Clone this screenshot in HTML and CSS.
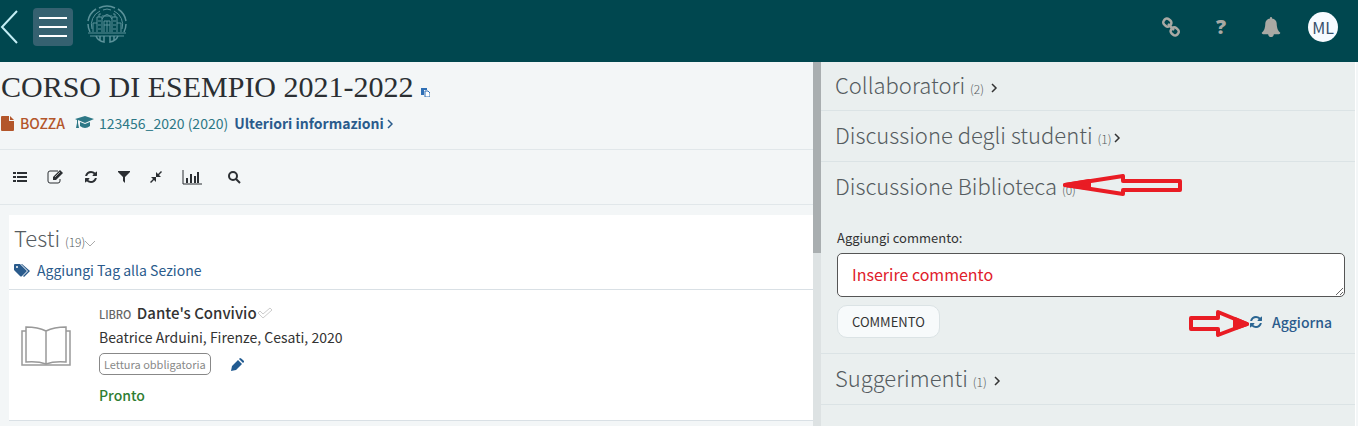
FILE: index.html
```html
<!DOCTYPE html>
<html lang="it">
  <head>
    <meta charset="UTF-8" />
    <meta name="viewport" content="width=device-width, initial-scale=1.0" />
    <title>Corso di esempio 2021-2022</title>
    <link rel="stylesheet" href="styles.css">
  </head>
  <body>
    <header class="topbar">
      <a class="back" href="#" aria-label="Indietro">
        <svg width="18" height="34" viewBox="0 0 18 34"><path d="M17 1L2 17l15 16" fill="none" stroke="#c4eef5" stroke-width="2" /></svg>
      </a>
      <button class="menu" aria-label="Menu"><span></span><span></span><span></span></button>
      <svg class="crest" width="40" height="38" viewBox="0 0 40 38" fill="none" stroke="#5b929a">
        <path d="M3 27A18 18 0 0 1 1 19M1 16A18 18 0 0 1 9 4M12 3a18 18 0 0 1 16 0M31 4a18 18 0 0 1 8 12M39 19a18 18 0 0 1-2 8" stroke-width="1.5" />
        <path d="M5 24A15 15 0 0 1 13 6M16 5q4-2 8 0M27 6a15 15 0 0 1 8 18" />
        <path d="M1 28h38M3 31h34M10 27V12h5v15M25 27V12h5v15M15 14q5-9 10 0M17 27V16h6v11M6 27v-9h4M30 18h4v9M12 12V9h2M28 12V9h-2M17 20h6M11 16h3M26 16h3M11 20h3M26 20h3M11 24h3M26 24h3M20 16v11M15 11h10" />
        <path d="M9 31q2 5 8 6v-6M23 31v6q6-1 8-6M13 31v4M27 31v4" stroke-width="1.5" />
      </svg>
      <nav>
        <a href="#" aria-label="Collegamenti">
          <svg width="20" height="20" viewBox="0 0 20 20" fill="none" stroke="#a9a9a4" stroke-width="2.5"><rect x="2" y="2" width="8" height="7" rx="3" transform="rotate(40 6 6)" /><rect x="10" y="11" width="8" height="7" rx="3" transform="rotate(40 14 14)" /><path d="M7 7l6 6" /></svg>
        </a>
        <a href="#" class="help" aria-label="Aiuto">?</a>
        <a href="#" aria-label="Notifiche">
          <svg width="20" height="20" viewBox="0 0 1792 1792" fill="#a9a9a4"><path d="M1728 1408q0 52-38 90t-90 38h-448q0 106-75 181t-181 75-181-75-75-181h-448q-52 0-90-38t-38-90q50-42 91-88t85-119.500 74.500-158.500 50-206 19.500-260q0-152 117-282.500t307-158.500q-8-19-8-39 0-40 28-68t68-28 68 28 28 68q0 20-8 39 190 28 307 158.500t117 282.500q0 139 19.500 260t50 206 74.500 158.500 85 119.500 91 88z" /></svg>
        </a>
        <a href="#" class="avatar">ML</a>
      </nav>
    </header>

    <div class="page">
      <main>
        <div class="intro">
          <h1>CORSO DI ESEMPIO 2021-2022
            <svg width="9" height="9" viewBox="0 0 9 9"><path d="M0 0h6v2H3v5H0z" fill="#2f6fb5" /><path d="M4 3h3l2 2v4H4z" fill="#fff" stroke="#2f6fb5" /></svg>
          </h1>
          <div class="meta">
            <svg width="13" height="15" viewBox="0 0 13 15" fill="#b3562b"><path d="M1 0h7v5h5v9q0 1-1 1H1q-1 0-1-1V1q0-1 1-1zM9 0l4 4H9z" /></svg>
            <span class="status">BOZZA</span>
            <svg class="cap" width="19" height="14" viewBox="0 0 19 14" fill="#2d7886"><path d="M10 0l9 3-9 4-7-3v3l1 5H1l1-5V4L0 3zM5 6l5 2 5-2v4q-5 4-10 0z" /></svg>
            <span class="code">123456_2020 (2020)</span>
            <a href="#" class="more">Ulteriori informazioni <svg width="6" height="10" viewBox="0 0 6 10"><path d="M1 1l4 4-4 4" /></svg></a>
          </div>
        </div>

        <div class="toolbar">
          <button aria-label="Elenco"><svg width="14" height="12" viewBox="0 0 14 12" fill="#2b2f33"><path d="M0 1h3v2H0zM4 1h10v2H4zM0 5h3v2H0zM4 5h10v2H4zM0 9h3v2H0zM4 9h10v2H4z" /></svg></button>
          <button aria-label="Modifica"><svg width="17" height="14" viewBox="0 0 17 14"><path d="M11 1H3Q1 1 1 3v8q0 2 2 2h8q2 0 2-2V9" fill="none" stroke="#2b2f33" /><path d="M6 7l7-7 3 3-7 7H6z" fill="#2b2f33" /><path d="M8 7l5-5" stroke="#aaa" /></svg></button>
          <button aria-label="Aggiorna elenco"><svg width="14" height="14" viewBox="0 0 1792 1792" fill="#2b2f33"><path d="M1639 1056q0 5-1 7-64 268-268 434.500t-478 166.500q-146 0-282.500-55t-243.500-157l-129 129q-19 19-45 19t-45-19-19-45v-448q0-26 19-45t45-19h448q26 0 45 19t19 45-19 45l-137 137q71 66 161 102t187 36q134 0 250-65t186-179q11-17 53-117 8-23 30-23h192q13 0 22.500 9.500t9.500 22.500zm25-800v448q0 26-19 45t-45 19h-448q-26 0-45-19t-19-45 19-45l138-138q-148-137-349-137-134 0-250 65t-186 179q-11 17-53 117-8 23-30 23h-199q-13 0-22.500-9.500t-9.500-22.500v-7q65-268 270-434.500t480-166.500q146 0 284 55.500t245 156.500l130-129q19-19 45-19t45 19 19 45z" /></svg></button>
          <button aria-label="Filtra"><svg width="12" height="12" viewBox="0 0 12 12" fill="#2b2f33"><path d="M0 0h12v1L7 6v6L5 10V6L0 1z" /></svg></button>
          <button aria-label="Comprimi"><svg width="12" height="12" viewBox="0 0 12 12"><path d="M6 6V1l2 2 3-3 1 1-3 3 2 2zM6 6H1l2 2-3 3 1 1 3-3 2 2z" fill="#2b2f33" /></svg></button>
          <button aria-label="Statistiche"><svg width="20" height="15" viewBox="0 0 20 15"><path d="M1 0v14h19" fill="none" stroke="#2b2f33" /><path d="M4 8h2v5H4zM8 4h2v9H8zM12 6h2v7h-2zM15 2h2v11h-2z" fill="#2b2f33" /></svg></button>
          <button aria-label="Cerca"><svg width="13" height="13" viewBox="0 0 13 13" fill="none" stroke="#2b2f33" stroke-width="2"><circle cx="5" cy="5" r="4" /><path d="M8 8l4 4" /></svg></button>
        </div>

        <section class="texts">
          <div class="texts-head">
            <h2>Testi <small>(19)</small><svg width="10" height="6" viewBox="0 0 10 6"><path d="M0 0l5 5 5-5" fill="none" stroke="#aaa" /></svg></h2>
            <a href="#">
              <svg width="17" height="13" viewBox="0 0 17 13" fill="#2a5b8c"><path d="M0 1q0-1 1-1h5l7 7-5 5q-1 1-2 0L0 6zM8 0l8 7-6 6-1-1 5-5-7-7z" /><circle cx="3" cy="3" r="1" fill="#fff" /></svg>
              Aggiungi Tag alla Sezione
            </a>
          </div>
          <article>
            <svg width="50" height="40" viewBox="0 0 50 40" fill="none" stroke="#999" stroke-width="1.500"><path d="M5 5H1v34h48V5h-4" /><path d="M25 5Q17 1 5 1v35q12-1 20 2 8-3 20-2V1Q33 1 25 5v33" /></svg>
            <div>
              <h3><span>LIBRO</span> Dante's Convivio<svg width="16" height="12" viewBox="0 0 16 12"><path d="M1 6l2-2 3 3 7-6 2 2-9 8z" fill="none" stroke="#ccc" /></svg></h3>
              <p>Beatrice Arduini, Firenze, Cesati, 2020</p>
              <div class="tags">
                <span class="tag">Lettura obbligatoria</span>
                <button aria-label="Modifica tag"><svg width="13" height="13" viewBox="0 0 13 13" fill="#225b91"><path d="M0 13l1-5 6-6 4 4-6 6zM8 1l1-1q1 0 4 3v1l-1 1z" /></svg></button>
              </div>
              <p class="ready">Pronto</p>
            </div>
          </article>
        </section>
      </main>

      <div class="scroll"></div>

      <aside>
        <section class="row"><h2>Collaboratori <small>(2)</small></h2><svg class="wide" width="7" height="10" viewBox="0 0 7 10"><path d="M1 1l4 4-4 4" /></svg></section>
        <section class="row"><h2>Discussione degli studenti <small>(1)</small></h2><svg width="7" height="10" viewBox="0 0 7 10"><path d="M1 1l4 4-4 4" /></svg></section>
        <section class="library">
          <div class="row">
            <h2>Discussione Biblioteca <small>(0)</small>
              <svg class="arrow-left" width="120" height="22" viewBox="0 0 120 22"><path d="M2 11L60 2v5h57v9H60v4z" fill="none" /><path d="M2 11l24-4v7z" /></svg>
            </h2>
          </div>
          <form>
            <label for="comment">Aggiungi commento:</label>
            <textarea id="comment" rows="1">Inserire commento</textarea>
            <div class="actions">
              <button type="button">COMMENTO</button>
              <a href="#">
                <svg width="14" height="14" viewBox="0 0 1792 1792" fill="#2a6592"><path d="M1639 1056q0 5-1 7-64 268-268 434.500t-478 166.500q-146 0-282.500-55t-243.500-157l-129 129q-19 19-45 19t-45-19-19-45v-448q0-26 19-45t45-19h448q26 0 45 19t19 45-19 45l-137 137q71 66 161 102t187 36q134 0 250-65t186-179q11-17 53-117 8-23 30-23h192q13 0 22.500 9.500t9.500 22.500zm25-800v448q0 26-19 45t-45 19h-448q-26 0-45-19t-19-45 19-45l138-138q-148-137-349-137-134 0-250 65t-186 179q-11 17-53 117-8 23-30 23h-199q-13 0-22.500-9.500t-9.500-22.500v-7q65-268 270-434.500t480-166.500q146 0 284 55.500t245 156.500l130-129q19-19 45-19t45 19 19 45z" /></svg>
                Aggiorna
                <svg class="arrow-right" width="61" height="29" viewBox="0 0 61 29"><path d="M59 15L30 26v-6H3V9h27V3z" fill="none" /><path d="M59 15l-12-5v9z" /></svg>
              </a>
            </div>
          </form>
        </section>
        <section class="row"><h2>Suggerimenti <small>(1)</small></h2><svg class="wide" width="7" height="10" viewBox="0 0 7 10"><path d="M1 1l4 4-4 4" /></svg></section>
      </aside>
    </div>
  </body>
</html>
```
FILE: styles.css
```css
* {
  box-sizing: border-box;
}

body {
  display: flex;
  flex-direction: column;
  min-height: 100vh;
  margin: 0;
  font-family: "Noto Sans CJK JP", "Noto Sans", sans-serif;
  font-size: 14px;
  line-height: 24px;
  color: #333;
  background-color: #f3f6f7;
}

h1, h2, h3, p {
  margin: 0;
}

a {
  color: #2a5b8c;
  text-decoration: none;
}

button {
  padding: 0;
  border: 0;
  background: none;
  font-family: inherit;
  cursor: pointer;
}

svg {
  flex: none;
}

.topbar {
  display: flex;
  align-items: flex-start;
  height: 62px;
  padding-right: 20px;
  background-color: #00474f;
}

.back {
  height: 34px;
  margin-top: 10px;
}

.menu {
  display: flex;
  flex-direction: column;
  align-items: center;
  justify-content: center;
  gap: 7px;
  width: 40px;
  height: 38px;
  margin: 8px 14px 0 15px;
  border-radius: 4px;
  background-color: #356170;
}

.menu span {
  width: 28px;
  height: 2px;
  background-color: #fff;
}

.crest {
  margin-top: 5px;
}

.topbar nav {
  display: flex;
  align-items: center;
  gap: 30px;
  margin: 12px 0 0 auto;
}

.topbar nav a {
  display: flex;
  justify-content: center;
  width: 20px;
}

.topbar .help {
  font-family: "Open Sans", sans-serif;
  font-size: 20px;
  font-weight: 800;
  color: #a9a9a4;
}

.topbar nav .avatar {
  width: 30px;
  margin-left: -3px;
  border-radius: 50%;
  background-color: #f7fbff;
  font-size: 16px;
  line-height: 30px;
  color: #35506b;
}

.page {
  flex: 1;
  display: grid;
  grid-template-columns: minmax(0, 813fr) 8px minmax(0, 537fr);
}

.intro {
  height: 87px;
  padding: 7px 1px 0;
}

h1 {
  font-family: "Liberation Serif", serif;
  font-size: 30px;
  font-weight: 400;
  line-height: 36px;
  color: #2b2f33;
}

.meta {
  display: flex;
  align-items: center;
  margin-top: 6px;
}

.status {
  margin: 0 10px 0 6px;
  font-weight: 500;
  color: #b3562b;
}

.code {
  margin: 0 6px 0 5px;
  color: #2d7886;
}

.more {
  font-weight: 700;
}

.more path,
.row path {
  fill: none;
  stroke: currentColor;
  stroke-width: 1.5;
}

.toolbar {
  display: flex;
  align-items: center;
  gap: 20px;
  height: 56px;
  padding-left: 13px;
  border: solid #e1e7ea;
  border-width: 1px 0;
}

.toolbar button {
  display: flex;
}

.toolbar button:last-child {
  margin-left: 6px;
}

.texts {
  margin: 10px 0 0 9px;
  background-color: #fff;
}

.texts-head {
  height: 75px;
  padding: 6px 5px;
  border-bottom: 1px solid #d9e0e5;
}

h2 {
  font-size: 22px;
  font-weight: 300;
  line-height: 32px;
  color: #555c60;
}

h2 small {
  font-size: 12px;
}

.texts-head a {
  display: flex;
  align-items: center;
  gap: 6px;
}

article {
  display: flex;
  gap: 28px;
  height: 131px;
  padding: 11px 12px;
  border-bottom: 1px solid #d9e0e5;
}

article > svg {
  margin-top: 25px;
}

h3 {
  font-size: 15px;
  font-weight: 500;
  line-height: 24px;
}

h3 span {
  margin-right: 2px;
  font-size: 11px;
  color: #666;
}

article p {
  line-height: 22px;
}

.tags {
  display: flex;
  align-items: center;
  gap: 20px;
  margin: 5px 0 9px;
}

.tags button {
  display: flex;
}

.tag {
  padding: 0 4px;
  border: 1px solid #888;
  border-radius: 5px;
  font-size: 11px;
  line-height: 20px;
  color: #888;
}

.ready {
  font-weight: 500;
  color: #2f7d32;
}

.scroll {
  background: linear-gradient(#a9aeb0, #a9aeb0) no-repeat top / 100% 191px #dde2e3;
}

aside {
  margin-right: 2px;
  border-right: 1px solid #fff;
  background-color: #eaefef;
}

.row {
  display: flex;
  align-items: center;
  height: 51px;
  padding: 0 14px;
  border-bottom: 1px solid #dbe3e5;
}

aside > .row:first-child {
  height: 49px;
}

.row > svg {
  margin: 4px 0 0 3px;
}

.row > .wide {
  margin-left: 7px;
}

.library {
  border-bottom: 1px solid #dbe3e5;
}

.library .row {
  border: 0;
}

.library h2 {
  position: relative;
}

.row .arrow-left {
  position: absolute;
  top: 5px;
  left: 228px;
}

.row .arrow-left path,
.arrow-right path {
  stroke: #e91c24;
  stroke-width: 4;
  stroke-linejoin: round;
}

.row .arrow-left path + path,
.arrow-right path + path {
  fill: #e91c24;
}

form {
  padding: 13px 10px 15px 16px;
}

label {
  display: block;
  font-size: 13px;
}

textarea {
  display: block;
  width: 100%;
  height: 44px;
  margin: 3px 0 8px;
  padding: 8px 14px;
  border: 1px solid #555;
  border-radius: 5px;
  font-family: inherit;
  font-size: 16px;
  line-height: 24px;
  color: #e0202b;
}

.actions {
  display: flex;
  justify-content: space-between;
  align-items: flex-start;
}

.actions button {
  height: 33px;
  padding: 0 14px;
  border: 1px solid #dbe3e5;
  border-radius: 10px;
  background-color: #f7fafb;
  font-size: 13px;
  color: #333;
}

.actions a {
  position: relative;
  display: flex;
  align-items: center;
  gap: 9px;
  margin: 5px 13px 0 0;
  font-weight: 500;
}

.arrow-right {
  position: absolute;
  top: -1px;
  right: 100%;
}
```
